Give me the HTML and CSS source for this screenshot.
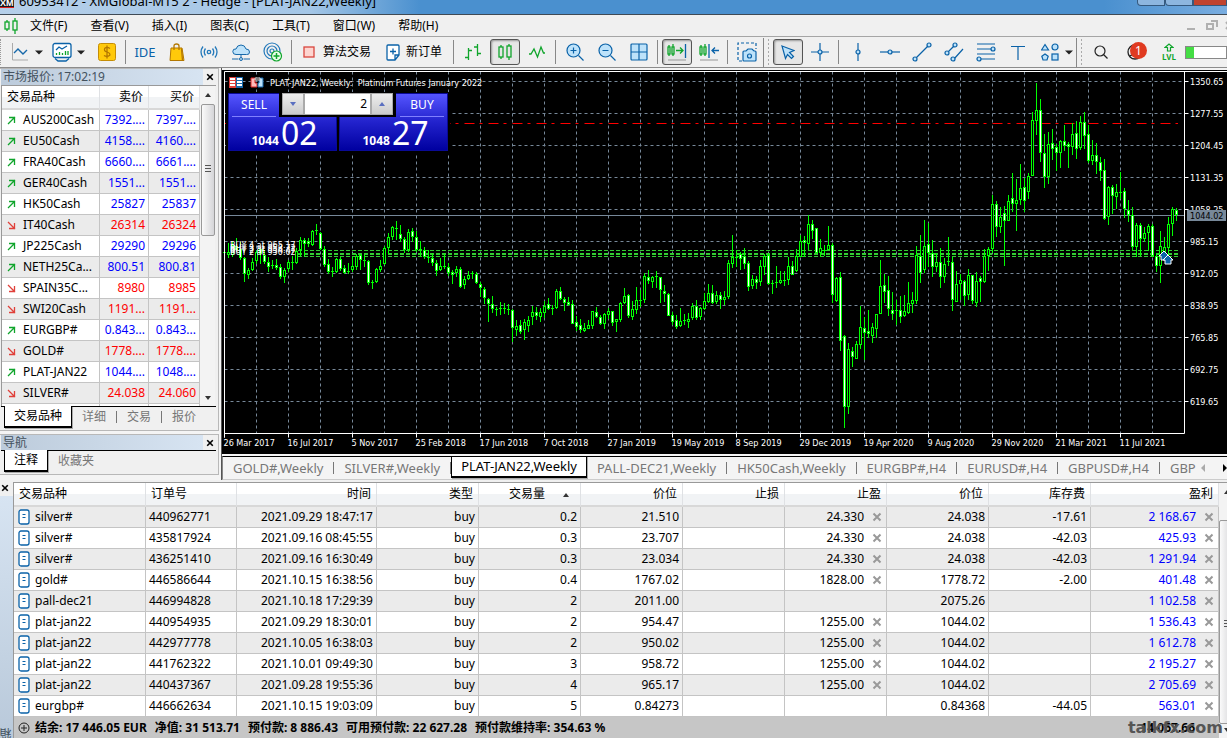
FILE: index.html
```html
<!DOCTYPE html>
<html lang="zh-CN">
<head>
<meta charset="utf-8">
<title>XMGlobal-MT5 2 - Hedge</title>
<link rel="stylesheet" href="styles.css">
</head>
<body>
<svg class="defs" aria-hidden="true">
  <symbol id="up" viewBox="0 0 9 9"><path d="M1 8 8 1M2 1.500h5.500v5.500" fill="none" stroke="#10a52c" stroke-width="1.300"/></symbol>
  <symbol id="down" viewBox="0 0 9 9"><path d="M1 1 8 8M7.500 2v5.500H2" fill="none" stroke="#e0403a" stroke-width="1.300"/></symbol>
  <symbol id="doc" viewBox="0 0 12 16"><rect x="1" y="1" width="10" height="14" rx="2" fill="#fff" stroke="#0a62a8" stroke-width="1.300"/><path d="M4.500 5.500h3M4.500 8.500h3" stroke="#0a62a8"/></symbol>
  <symbol id="cross" viewBox="0 0 10 10"><path d="M1.500 1.500l7 7M8.500 1.500l-7 7" stroke="currentColor" stroke-width="2"/></symbol>
  <symbol id="caret" viewBox="0 0 8 5"><path d="M0 .5h8l-4 4z" fill="#222"/></symbol>
</svg>

<header class="titlebar">
  <span class="applogo">XM</span>
  <span class="apptitle">60953412 - XMGlobal-MT5 2 - Hedge - [PLAT-JAN22,Weekly]</span>
  <div class="winbtns"><button aria-label="最小化"></button><button aria-label="最大化"></button><button class="close" aria-label="关闭"></button></div>
</header>

<nav class="menubar">
  <svg class="menulogo" width="14" height="16" viewBox="0 0 14 16" fill="none" stroke="#10a52c" stroke-width="1.300"><rect x="1" y="4" width="4" height="7"/><path d="M3 2v2M3 11v2M11 0v3M11 12v4"/><rect x="9" y="3" width="4" height="9"/></svg>
  <button>文件(F)</button><button>查看(V)</button><button>插入(I)</button><button>图表(C)</button><button>工具(T)</button><button>窗口(W)</button><button>帮助(H)</button>
  <svg class="mdi" width="46" height="12" viewBox="0 0 46 12" fill="none" stroke="#b0b0b0" stroke-width="2"><path d="M0 9h8M24 1h6v6"/><rect x="20" y="4" width="6" height="5"/><path d="M39 2l6 7M45 2l-6 7"/></svg>
</nav>

<div class="toolbar">
  <div class="drops">
    <button class="drop" aria-label="线图"><svg width="18" height="20" viewBox="0 0 18 20" fill="none"><path d="M1.500 1v17H17" stroke="#aaa"/><path d="M3 11l4-4 5 5 4-4" stroke="#1769aa" stroke-width="1.400"/></svg><svg width="8" height="5"><use href="#caret"/></svg></button>
    <button class="drop" aria-label="指标"><svg width="20" height="20" viewBox="0 0 20 20" fill="none" stroke="#0a62a8" stroke-width="1.300"><rect x="1" y="1.500" width="18" height="14" rx="2" fill="#fff"/><path d="M4 8l3-3 3 2 5-3M3 16.500l3 2.500h8l3-2.500"/><path d="M4.500 13v-2M7.500 13v-3M10.500 13v-2M13.500 13V9M16 13v-4" stroke="#10a52c"/></svg><svg width="8" height="5"><use href="#caret"/></svg></button>
  </div>
  <button class="tool" aria-label="报价"><svg width="18" height="18" viewBox="0 0 18 18"><rect x=".5" y=".5" width="17" height="17" rx="2" fill="#ffc90a" stroke="#c58d05"/><path d="M12 5.500Q9 3.500 6.800 5.200 5.500 8 9 9t2.800 3.300Q9 14.500 6 12.500M9 2.500v13" fill="none" stroke="#b37700" stroke-width="1.300"/></svg></button>
  <i class="sep"></i>
  <button class="tool ide">IDE</button>
  <button class="tool" aria-label="市场"><svg width="16" height="18" viewBox="0 0 16 18"><path d="M2 5h11l2 12.500H1z" fill="#ffc90a" stroke="#b37700"/><path d="M5 7V3q0-2 2.500-2T10 3v4M12.500 5.500l1 12" fill="none" stroke="#b37700" stroke-width="1.300"/></svg></button>
  <button class="tool" aria-label="信号"><svg width="18" height="14" viewBox="0 0 18 14" fill="none" stroke="#2479ba" stroke-width="1.300"><circle cx="9" cy="7" r="1.700"/><path d="M5.500 3.500q-2.500 3.500 0 7M12.500 3.500q2.500 3.500 0 7M3 1.500q-4 5.500 0 11M15 1.500q4 5.500 0 11"/></svg></button>
  <button class="tool" aria-label="云"><svg width="18" height="17" viewBox="0 0 18 17" stroke="#1769aa"><path d="M4 10.500Q.8 10.500.8 7.500T4 5q1-4 5-4t5 4q3.500 0 3.500 3T14.500 10.500z" fill="#bde2fa"/><path d="M9 10.500v3M0 15h6.500M11.500 15H18" fill="none"/><circle cx="9" cy="15" r="1.500" fill="#bde2fa"/></svg></button>
  <button class="tool" aria-label="VPS"><svg width="20" height="20" viewBox="0 0 20 20" fill="none" stroke="#2479ba" stroke-width="1.200"><circle cx="9" cy="9" r="8"/><circle cx="9" cy="9" r="5"/><circle cx="9" cy="9" r="2"/><circle cx="13.500" cy="14" r="5" fill="#eaffea" stroke="#10a52c"/><path d="M10.500 14h6M13.500 11v6" stroke="#10a52c" stroke-width="1.500"/></svg></button>
  <i class="sep"></i>
  <button class="texttool"><svg width="12" height="12" viewBox="0 0 12 12"><rect x="1" y="1" width="10" height="10" fill="#fdd5d0" stroke="#d9463d" stroke-width="1.300"/></svg>算法交易</button>
  <button class="texttool order"><svg width="14" height="17" viewBox="0 0 14 17" fill="#fff" stroke="#0a62a8" stroke-width="1.300"><path d="M1 2q0-1 1-1h10q1 0 1 1v9l-4 5H2q-1 0-1-1zM13 11H9v5M4 7.500h6M7 4.500v6"/></svg>新订单</button>
  <i class="sep"></i>
  <button class="tool" aria-label="柱状图"><svg width="18" height="18" viewBox="0 0 18 18" fill="none" stroke="#10a52c" stroke-width="1.300"><path d="M4.500 5v12M1 14.500h3.500M4.500 7.500H8M13.500 1v12M10 4h3.500M13.500 10.500H17"/></svg></button>
  <button class="tool on" aria-label="蜡烛图"><svg width="14" height="16" viewBox="0 0 14 16" fill="none" stroke="#10a52c" stroke-width="1.300"><rect x="1" y="3" width="4" height="10"/><rect x="9" y="2" width="4" height="11"/><path d="M3 1v2M3 13v2M11 0v2M11 13v3"/></svg></button>
  <button class="tool" aria-label="折线"><svg width="18" height="14" viewBox="0 0 18 14" fill="none" stroke="#10a52c" stroke-width="1.300"><path d="M1 9h2l3-5 3.500 8L13 2l2.500 6H17"/></svg></button>
  <i class="sep"></i>
  <button class="tool" aria-label="放大"><svg width="18" height="18" viewBox="0 0 18 18" fill="#bde2fa" stroke="#0a62a8" stroke-width="1.200"><circle cx="7.500" cy="7.500" r="6.500"/><path d="M4.500 7.500h6M7.500 4.500v6M12.500 12.500l5 5"/></svg></button>
  <button class="tool" aria-label="缩小"><svg width="18" height="18" viewBox="0 0 18 18" fill="#bde2fa" stroke="#0a62a8" stroke-width="1.200"><circle cx="7.500" cy="7.500" r="6.500"/><path d="M4.500 7.500h6M12.500 12.500l5 5"/></svg></button>
  <button class="tool" aria-label="平铺"><svg width="18" height="18" viewBox="0 0 18 18" fill="#bde2fa" stroke="#0a62a8" stroke-width="1.200"><rect x="1" y="1" width="16" height="16" rx="1"/><path d="M9 1v16M1 9h16"/></svg></button>
  <i class="sep"></i>
  <button class="tool on" aria-label="图表移动"><svg width="20" height="18" viewBox="0 0 20 18" fill="none" stroke="#10a52c" stroke-width="1.300"><rect x="1" y="4" width="2" height="7"/><rect x="5" y="4" width="2" height="7"/><path d="M2 2v2M2 11v2M6 1v3M6 11v2M9 7.500h7M13 4.500l3 3-3 3"/><path d="M18.500 1v14" stroke="#0a62a8"/><path d="M1 17h18" stroke="#aaa"/></svg></button>
  <button class="tool" aria-label="自动滚动"><svg width="20" height="18" viewBox="0 0 20 18" fill="none" stroke="#10a52c" stroke-width="1.300"><rect x="1" y="4" width="2" height="7"/><rect x="5" y="4" width="2" height="7"/><path d="M2 2v2M2 11v2M6 1v3M6 11v2"/><path d="M10 1v14M13 7.500h7M16 4.500l-3 3 3 3" stroke="#0a62a8"/><path d="M1 17h18" stroke="#aaa"/></svg></button>
  <i class="sep"></i>
  <button class="tool" aria-label="截图"><svg width="20" height="20" viewBox="0 0 20 20" fill="none" stroke="#0a62a8" stroke-width="1.200"><path d="M5 19H1V1h18v6" stroke-dasharray="3 2"/><path d="M6 10q0-1 1-1h2l2-2h4l2 2h1q1 0 1 1v8q0 1-1 1H7q-1 0-1-1z" fill="#bde2fa"/><circle cx="12.500" cy="14" r="2"/></svg></button>
  <i class="grip"></i>
  <button class="tool on" aria-label="光标"><svg width="14" height="15" viewBox="0 0 14 15" fill="#bde2fa" stroke="#0a62a8" stroke-width="1.200"><path d="M1 1l12 4.500-4.500 2 4 4-2 2-4-4-2 4z"/></svg></button>
  <button class="tool" aria-label="十字线"><svg width="18" height="18" viewBox="0 0 18 18" fill="#bde2fa" stroke="#0a62a8" stroke-width="1.200"><path d="M9 0v18M0 9h18"/><circle cx="9" cy="9" r="2"/></svg></button>
  <i class="sep"></i>
  <button class="tool" aria-label="垂直线"><svg width="18" height="18" viewBox="0 0 18 18" fill="#bde2fa" stroke="#0a62a8" stroke-width="1.200"><path d="M9 0v18"/><circle cx="9" cy="9" r="2"/></svg></button>
  <button class="tool" aria-label="水平线"><svg width="20" height="18" viewBox="0 0 20 18" fill="#bde2fa" stroke="#0a62a8" stroke-width="1.200"><path d="M0 9h20"/><circle cx="10" cy="9" r="2"/></svg></button>
  <button class="tool" aria-label="趋势线"><svg width="20" height="20" viewBox="0 0 20 20" fill="#bde2fa" stroke="#0a62a8" stroke-width="1.200"><path d="M3 17L17 3"/><circle cx="3" cy="17" r="2"/><circle cx="17" cy="3" r="2"/></svg></button>
  <button class="tool" aria-label="通道"><svg width="20" height="20" viewBox="0 0 20 20" fill="#bde2fa" stroke="#0a62a8" stroke-width="1.200"><path d="M3 11l8-8M10 17l9-10"/><circle cx="3" cy="11" r="2"/><circle cx="11" cy="3" r="2"/><circle cx="9" cy="17" r="2"/></svg></button>
  <button class="tool" aria-label="斐波那契"><svg width="20" height="20" viewBox="0 0 20 20" fill="#bde2fa" stroke="#0a62a8" stroke-width="1.200"><path d="M1 2h18M1 7h18M1 12h18M1 17h18"/><circle cx="17" cy="7" r="2"/><circle cx="3" cy="17" r="2"/></svg></button>
  <button class="tool" aria-label="文本"><svg width="14" height="15" viewBox="0 0 14 15"><path d="M0 1.500h14M7 1.500V15" stroke="#0a62a8" stroke-width="1.200"/></svg></button>
  <button class="drop" aria-label="对象"><svg width="18" height="18" viewBox="0 0 18 18" fill="#bde2fa" stroke="#0a62a8" stroke-width="1.200"><path d="M4 1.500L7.500 7h-7zM4 11l3.200 2.300L6 17H2L.8 13.300z"/><circle cx="14" cy="4" r="3"/><rect x="11" y="11" width="6" height="6"/></svg><svg width="8" height="5"><use href="#caret"/></svg></button>
  <i class="grip"></i>
  <button class="tool" aria-label="搜索"><svg width="14" height="14" viewBox="0 0 14 14" fill="none" stroke="#222" stroke-width="1.200"><circle cx="6" cy="6" r="5"/><path d="M9.500 9.500L13.500 13.500"/></svg></button>
  <button class="tool bell" aria-label="通知"><svg width="16" height="16" viewBox="0 0 16 16" fill="none" stroke="#222" stroke-width="1.300"><circle cx="8" cy="8" r="7"/><circle cx="8" cy="6" r="3"/><path d="M3 12q5-4 10 0"/></svg><span class="badge">1</span></button>
  <button class="tool lvl" aria-label="等级"><svg width="10" height="9" viewBox="0 0 10 9" fill="none" stroke="#10a52c" stroke-width="1.200"><path d="M1 4.500L5 1l4 3.500H6.500V8h-3V4.500z"/></svg><span>LVL</span></button>
  <div class="progress"><div></div></div>
</div>

<main class="workspace">
  <aside class="side">
    <section class="dock">
      <div class="dockhead"><span>市场报价: 17:02:19</span><button aria-label="关闭市场报价"><svg width="8" height="8" viewBox="0 0 10 10"><use href="#cross"/></svg></button></div>
      <div class="quotes">
        <table class="grid market">
          <colgroup><col><col class="w49"><col class="w51"></colgroup>
          <thead><tr><th class="l">交易品种</th><th>卖价</th><th>买价</th></tr></thead>
          <tbody id="market"></tbody>
        </table>
        <div class="scroll"><i class="tri upw"></i><i class="thumb"></i><i class="tri dnw"></i></div>
      </div>
      <div class="tabs"><button class="active">交易品种</button><button>详细</button><button>交易</button><button>报价</button></div>
    </section>
    <section class="dock nav">
      <div class="dockhead"><span>导航</span><button aria-label="关闭导航"><svg width="8" height="8" viewBox="0 0 10 10"><use href="#cross"/></svg></button></div>
      <div class="tabs"><button class="active">注释</button><button>收藏夹</button></div>
    </section>
  </aside>

  <section class="chartarea">
    <div class="chart">
      <svg id="chart" class="plot" role="img" aria-label="PLAT-JAN22 Weekly"></svg>
      <div class="oneclick">
        <button class="deal"><span class="side-name">SELL</span><span class="price"><b>1044</b><em>02</em></span></button>
        <button class="deal buy"><span class="side-name">BUY</span><span class="price"><b>1048</b><em>27</em></span></button>
        <div class="lots"><button aria-label="减少"><i class="tri dnw"></i></button><input value="2" aria-label="交易量"><button aria-label="增加"><i class="tri upw"></i></button></div>
      </div>
    </div>
    <div class="charttabs tabs">
      <button>GOLD#,Weekly</button><button>SILVER#,Weekly</button><button class="active">PLAT-JAN22,Weekly</button><button>PALL-DEC21,Weekly</button><button>HK50Cash,Weekly</button><button>EURGBP#,H4</button><button>EURUSD#,H4</button><button>GBPUSD#,H4</button><button class="cut">GBP</button>
      <span class="arrows"><i class="left"></i><i class="right"></i></span>
    </div>
  </section>
</main>

<section class="terminal">
  <div class="strip"><button aria-label="关闭工具箱"><svg width="8" height="8" viewBox="0 0 10 10"><use href="#cross"/></svg></button><div class="striptitle"><span>工具箱</span></div></div>
  <div class="trades">
    <table class="grid">
      <colgroup><col><col class="w91"><col class="w140"><col class="w102"><col class="w102"><col class="w102"><col class="w102"><col class="w102"><col class="w102"><col class="w102"><col class="w128"></colgroup>
      <thead><tr><th class="l">交易品种</th><th class="l">订单号</th><th>时间</th><th>类型</th><th class="sorted">交易量<i class="tri upw"></i></th><th>价位</th><th>止损</th><th>止盈</th><th>价位</th><th>库存费</th><th>盈利</th></tr></thead>
      <tbody id="trades"></tbody>
    </table>
    <div class="status">
      <svg width="12" height="12" viewBox="0 0 12 12" fill="none" stroke="#222"><circle cx="6" cy="6" r="5"/><path d="M3 6h6M6 3v6"/></svg>
      <span>结余: 17 446.05 EUR</span><span>净值: 31 513.71</span><span>预付款: 8 886.43</span><span>可用预付款: 22 627.28</span><span>预付款维持率: 354.63 %</span>
      <span class="total">14 067.66</span>
      <span class="mark">talkfx.com</span>
    </div>
  </div>
  <div class="scroll edge"><i class="tri upw"></i><i class="thumb"></i><i class="tri dnw"></i></div>
</section>
<script src="app.js"></script>
</body>
</html>
```

FILE: styles.css
```css
* { box-sizing: border-box; }
body { margin: 0; min-height: 100vh; display: flex; flex-direction: column; background: #f0f0f0; color: #000; font: 12px/16px "Noto Sans", "Noto Sans CJK SC", sans-serif; overflow: hidden; }
button { font: inherit; color: inherit; background: none; border: 0; padding: 0; margin: 0; white-space: nowrap; }
svg { display: block; flex: none; }
.defs { width: 0; height: 0; position: absolute; }

.titlebar { height: 15px; display: flex; align-items: flex-end; gap: 5px; overflow: hidden; border-bottom: 1px solid #3f4a55; background: linear-gradient(90deg, #b5cfe9 0, #a4c6e6 310px, #4a90cf 420px, #4a90cf 90%, #79ade0 100%); }
.applogo { width: 14px; height: 9px; margin-bottom: 6px; overflow: hidden; background: #161616; color: #fff; font: bold 9px/8px "Liberation Sans", sans-serif; border-bottom: 1px solid #d22; }
.apptitle { flex: 1; font-size: 13px; line-height: 18px; margin-bottom: 4px; white-space: nowrap; }
.winbtns { display: flex; align-self: flex-start; }
.winbtns button { width: 28px; height: 6px; border: 1px solid #35597e; border-top: 0; border-radius: 0 0 0 4px; background: #8db6df; }
.winbtns .close { width: 34px; background: #c0432f; border-radius: 0; }

.menubar { height: 22px; display: flex; align-items: center; border-bottom: 1px solid #a5a5a5; padding-left: 4px; }
.menulogo { margin-right: 12px; }
.menubar button { margin-right: 23px; }
.mdi { margin-left: auto; margin-right: -6px; }

.toolbar { height: 31px; display: flex; align-items: center; border-bottom: 1px solid #8c8c8c; background: #f0f0f0; overflow: hidden; flex: none; }
.drops { display: flex; padding: 0 3px 0 3px; border-left: 1px dotted #999; }
.tool { width: 32px; height: 26px; display: flex; align-items: center; justify-content: center; flex: none; }
.tool.on { border: 1px solid #555; border-radius: 3px; background: #e6e6e6; box-shadow: inset 1px 1px 2px #999; width: 30px; margin: 0 1px; }
.drop { width: 42px; height: 26px; display: flex; align-items: center; flex: none; }
.drop svg:first-child { margin: 0 auto; }
.drop svg:last-child { margin-right: 3px; }
.sep { width: 6px; height: 24px; flex: none; border-left: 2px solid transparent; background: linear-gradient(90deg, #888 1px, transparent 1px); background-clip: padding-box; }
.grip { width: 9px; height: 29px; flex: none; border-left: 1px solid #888; padding-left: 3px; background: radial-gradient(circle, #aaa 1px, transparent 1px) 3px 0 / 3px 4px repeat-y; }
.ide { color: #0a62a8; font-size: 13px; }
.texttool { display: flex; align-items: center; gap: 8px; width: 85px; padding-left: 8px; flex: none; }
.order { width: 71px; padding-left: 6px; gap: 6px; }
.bell { position: relative; margin: 0 2px; }
.badge { position: absolute; left: 11px; top: 3px; width: 17px; height: 17px; border-radius: 9px; background: #e03a20; color: #fff; font-size: 12px; line-height: 17px; }
.lvl { flex-direction: column; gap: 1px; color: #10a52c; font-size: 8px; line-height: 8px; font-weight: bold; }
.progress { flex: 1; height: 13px; border: 1px solid #888; background: #fff; }
.progress div { width: 8px; height: 11px; background: #44dd44; }

.workspace { display: flex; background: #f4f4f4; }
.side { width: 222px; flex: none; padding-right: 2px; border-right: 1px solid #555; }
.dock { padding: 0 2px 0 1px; border: 1px solid #b8b8b8; border-left: 0; background: #f0f0f0; }
.nav { margin-top: 3px; }
.dockhead { height: 16px; display: flex; align-items: center; justify-content: space-between; color: #44525e; background: linear-gradient(90deg, #bccbdb, #d7e4f2 202px, #f0f0f0 202px); padding-left: 2px; line-height: 14px; }
.nav .dockhead { height: 15px; }
.dockhead button { width: 12px; height: 12px; display: flex; align-items: center; justify-content: center; color: #000; }
.quotes { display: flex; height: 321px; overflow: hidden; border-left: 1px solid #999; border-top: 1px solid #999; align-items: stretch; }
.grid { border-collapse: separate; border-spacing: 0; table-layout: fixed; background: #fff; }
.grid th { height: 24px; padding: 0 5px; font-weight: normal; text-align: right; background: linear-gradient(#fff 50%, #f1f3f5 50%); border-right: 1px solid #dfe1e4; border-bottom: 2px solid #d8d8d8; white-space: nowrap; }
.grid td { height: 21px; padding: 0 3px; line-height: 20px; text-align: right; border-right: 1px solid #c4c4c4; border-bottom: 1px solid #c4c4c4; white-space: nowrap; overflow: hidden; }
.grid .l { text-align: left; }
.market { width: 198px; flex: none; align-self: flex-start; }
.market tr:nth-child(even) td { background: #ebebeb; }
.w49 { width: 49px; } .w51 { width: 51px; } .w91 { width: 91px; } .w102 { width: 102px; } .w128 { width: 128px; } .w140 { width: 140px; }
.sym { display: flex; align-items: center; gap: 7px; padding-left: 2px; }
.blue { color: #00f; } .red { color: #f00; }
.scroll { width: 15px; flex: none; display: flex; flex-direction: column; align-items: center; padding: 7px 0 6px; background: #f3f3f3; }
.thumb { width: 14px; height: 132px; margin-top: 7px; border: 1px solid #999; border-radius: 2px; background: linear-gradient(#555, #555) center 60px / 6px 1px no-repeat, linear-gradient(#555, #555) center 63px / 6px 1px no-repeat, linear-gradient(#555, #555) center 66px / 6px 1px no-repeat, linear-gradient(90deg, #fafafa, #d5d5d8); }
.tri { width: 0; height: 0; border: 3px solid transparent; flex: none; }
.upw { border-top: 0; border-bottom: 4px solid #333; }
.dnw { border-bottom: 0; border-top: 4px solid #333; }
.scroll .dnw { margin-top: auto; }
.tabs { display: flex; align-items: flex-start; color: #777; border-top: 1px solid #000; height: 24px; padding-left: 3px; }
.tabs button { height: 12px; line-height: 12px; margin-top: 4px; padding: 0 10px; border-right: 1px solid #777; }
.tabs button:last-of-type { border-right: 0; }
.tabs .active { height: 22px; line-height: 20px; margin-top: -1px; padding: 0 9px; color: #000; background: #fff; border: solid #000; border-width: 0 1px 2px 1px; box-shadow: 1px 1px #aaa; }

.chartarea { flex: 1; min-width: 0; display: flex; flex-direction: column; }
.chart { position: relative; background: #000; margin-top: 2px; height: 384px; }
.plot { width: 100%; height: 384px; font: 9px "DejaVu Sans Condensed", "DejaVu Sans", sans-serif; }
.oneclick { position: absolute; left: 4px; top: 22px; padding: 1px 2px 3px; display: flex; gap: 2px; background: #000; }
.deal { width: 109px; height: 58px; display: flex; flex-direction: column; align-items: stretch; color: #fff; background: linear-gradient(#5555ff, #2222cc 50%, #0000a0); border: 1px solid #0a0a96; }
.side-name { width: 44px; margin-left: 3px; height: 23px; line-height: 22px; border-bottom: 1px solid #8080ff; }
.buy .side-name { align-self: flex-end; margin-right: 3px; }
.price { display: flex; align-items: baseline; justify-content: center; gap: 2px; line-height: 31px; padding-left: 4px; }
.price em { font-style: normal; font-size: 32px; }
.lots { position: absolute; left: 53px; top: 0; width: 117px; height: 25px; padding: 1px 3px 2px; background: #000; display: flex; }
.lots button { width: 22px; display: flex; align-items: center; justify-content: center; background: linear-gradient(#eee, #ccc); border: 1px solid #aaa; }
.lots .upw { border-bottom-color: #5a6fc0; } .lots .dnw { border-top-color: #5a6fc0; }
.lots input { flex: 1; min-width: 0; border: 1px solid #aaa; padding: 0 3px; text-align: right; font: inherit; background: #fff; }
.charttabs { margin-top: 2px; padding-left: 0; overflow: hidden; border-left: 1px solid #888; border-bottom: 1px solid #ccc; font-size: 13px; }
.charttabs button { padding: 0 10px; margin-top: 5px; flex: none; }
.charttabs .active { margin-top: -1px; padding: 0 9px; }
.charttabs .cut { flex: 0 1 auto; padding-right: 0; }
.arrows { margin-left: auto; display: flex; gap: 18px; padding-top: 7px; }
.arrows i { border: 4px solid transparent; border-width: 4px 0 4px 4px; border-left-color: #000; }
.arrows .left { border-width: 4px 4px 4px 0; border-right-color: #aaa; }

.terminal { flex: 1; display: flex; margin-top: 2px; min-height: 0; }
.strip { width: 14px; flex: none; display: flex; flex-direction: column; border-right: 1px solid #999; }
.strip button { padding: 2px 1px 4px; }
.striptitle { flex: 1; overflow: hidden; background: linear-gradient(#d7e4f2, #b9c9da); display: flex; align-items: flex-end; height: 0; }
.striptitle span { writing-mode: vertical-rl; transform: rotate(180deg); color: #44525e; margin-bottom: -26px; line-height: 13px; }
.trades { flex: 1; min-width: 0; display: flex; flex-direction: column; border-top: 1px solid #999; }
.trades .grid { width: 100%; }
.trades tr:nth-child(odd) td { background: #ebebeb; }
.trades .sym { gap: 5px; padding-left: 1px; }
.withx { display: flex; justify-content: flex-end; align-items: center; gap: 8px; padding-right: 1px; }
.withx svg { color: #999; }
.sorted .tri { display: inline-block; vertical-align: middle; margin: 0 6px 0 18px; }
.status { flex: 1; min-height: 21px; display: flex; align-items: center; gap: 8px; padding: 0 4px; background: #c6c6c6; font-weight: bold; position: relative; white-space: nowrap; }
.status svg { margin-right: -3px; }
.total { margin-left: auto; padding-right: 20px; }
.mark { position: absolute; right: -4px; bottom: 0; font: 900 16px/20px "DejaVu Sans", sans-serif; color: #555; }
.edge { width: 8px; border-top: 1px solid #999; overflow: hidden; align-items: flex-start; }
.edge .thumb { height: 204px; background-position: 4px 99px, 4px 102px, 4px 105px, 0 0; margin-top: 26px; flex: none; }
.edge .tri { margin-left: 5px; }
```

FILE: app.js
```js
const quotes = [
  ['AUS200Cash', '7392....', '7397....', 1], ['EU50Cash', '4158....', '4160....', 1], ['FRA40Cash', '6660....', '6661....', 1],
  ['GER40Cash', '1551...', '1551...', 1], ['HK50Cash', '25827', '25837', 1], ['IT40Cash', '26314', '26324', 0],
  ['JP225Cash', '29290', '29296', 1], ['NETH25Ca...', '800.51', '800.81', 1], ['SPAIN35C...', '8980', '8985', 0],
  ['SWI20Cash', '1191...', '1191...', 0], ['EURGBP#', '0.843...', '0.843...', 1], ['GOLD#', '1778....', '1778....', 0],
  ['PLAT-JAN22', '1044....', '1048....', 1], ['SILVER#', '24.038', '24.060', 0], ['', '', '', 2]
];
document.getElementById('market').innerHTML = quotes.map(([name, bid, ask, up]) => {
  const tone = up ? 'blue' : 'red';
  const icon = up === 2 ? '' : `<svg width="9" height="9"><use href="#${up ? 'up' : 'down'}"/></svg>`;
  return `<tr><td><div class="sym">${icon}<span>${name}</span></div></td><td class="${tone}">${bid}</td><td class="${tone}">${ask}</td></tr>`;
}).join('');

const trades = `silver#|440962771|2021.09.29 18:47:17|0.2|21.510|24.330|24.038|-17.61|2 168.67
silver#|435817924|2021.09.16 08:45:55|0.3|23.707|24.330|24.038|-42.03|425.93
silver#|436251410|2021.09.16 16:30:49|0.3|23.034|24.330|24.038|-42.03|1 291.94
gold#|446586644|2021.10.15 16:38:56|0.4|1767.02|1828.00|1778.72|-2.00|401.48
pall-dec21|446994828|2021.10.18 17:29:39|2|2011.00||2075.26||1 102.58
plat-jan22|440954935|2021.09.29 18:30:01|2|954.47|1255.00|1044.02||1 536.43
plat-jan22|442977778|2021.10.05 16:38:03|2|950.02|1255.00|1044.02||1 612.78
plat-jan22|441762322|2021.10.01 09:49:30|3|958.72|1255.00|1044.02||2 195.27
plat-jan22|440437367|2021.09.28 19:55:36|4|965.17|1255.00|1044.02||2 705.69
eurgbp#|446662634|2021.10.15 19:03:09|5|0.84273||0.84368|-44.05|563.01`.split('\n').map(r => r.split('|'));
const withX = v => v ? `<div class="withx">${v}<svg width="10" height="10"><use href="#cross"/></svg></div>` : '';
document.getElementById('trades').innerHTML = trades.map(([sym, id, time, vol, open, tp, now, swap, profit]) =>
  `<tr><td><div class="sym"><svg width="12" height="16"><use href="#doc"/></svg><span>${sym}</span></div></td><td class="l">${id}</td><td>${time}</td><td>buy</td><td>${vol}</td><td>${open}</td><td></td><td>${withX(tp)}</td><td>${now}</td><td>${swap}</td><td class="blue">${withX(profit)}</td></tr>`
).join('');

// Candles: high, body top, body bottom, low; "d" marks a falling week.
const candles = `178,182,184,187 173,182,185,188 171,175,185,187 168,176,180,182 172,179,188,190d 187,188,204,212d 198,200,205,209 188,192,200,201 180,182,191,194 177,179,184,194d
180,185,192,194d 187,192,197,202d 190,195,197,199 189,195,198,200d 194,197,207,209d 198,200,207,213 190,192,199,202 186,192,194,200 178,181,193,194 167,170,180,186
168,170,174,186d 168,171,174,177d 160,161,175,176 154,160,162,165 162,163,179,180d 176,179,195,197d 189,194,202,204d 197,201,203,207 188,189,202,203 187,189,199,201d
195,198,203,204d 193,201,203,204 187,196,200,202 184,186,197,200 184,185,190,200d 185,190,191,197 190,191,213,215d 210,212,213,219 198,199,212,213 190,196,200,202
176,178,194,195 163,167,178,184 156,157,167,170 151,158,160,170 155,164,169,172d 167,169,180,183d 159,162,180,182 158,161,167,172d 161,167,180,182d 171,179,181,187
177,180,187,189d 180,187,188,193 184,188,193,196d 190,193,201,206d 188,196,200,201 184,196,197,199 193,197,203,206d 200,202,205,214d 196,199,203,207 197,199,217,218d
206,209,215,219 201,205,209,210 201,203,205,209 202,204,213,214d 212,214,218,227d 217,219,228,234d 228,229,234,252d 226,234,239,243d 237,239,241,246 232,238,240,245
233,238,240,244 234,239,240,245 239,240,258,272d 250,256,260,266 250,255,262,264d 249,252,260,270 246,250,256,262 236,242,247,255 237,242,246,250d 238,242,247,252
231,236,243,248 228,234,239,240d 235,238,239,245 219,221,238,239 217,221,229,230d 227,229,233,241d 227,232,235,236d 230,234,254,254d 246,252,257,261d 249,255,260,263d
253,258,261,262 250,255,259,259 241,241,256,259 237,242,247,248d 245,247,254,255d 243,244,254,259 238,241,245,249 241,241,253,256d 249,249,252,262 232,233,250,252
218,226,233,234 224,225,246,248d 231,239,247,250 217,230,240,244 220,230,231,237 203,206,230,233 200,207,211,214d 206,207,212,218 201,206,207,218 207,207,220,233d
215,221,224,232d 223,224,246,246d 242,245,252,255d 245,250,257,259d 238,251,256,257 244,250,252,255 243,249,252,258 233,236,248,250 230,236,248,250d 237,238,247,250
223,231,239,240 214,223,232,233 215,223,233,234d 221,225,232,234 222,225,230,239d 221,227,230,235 190,193,227,229 165,187,194,198 180,187,188,197 182,184,189,200d
178,186,194,199d 191,193,217,221d 205,209,216,219 206,209,213,219d 190,196,212,216 184,186,197,205 183,185,214,215d 210,213,215,224 196,212,213,218 201,210,213,214
201,210,211,216 187,196,210,215 191,196,205,205d 179,186,201,202 165,171,187,187 166,170,173,187d 145,154,174,180 150,154,161,169d 158,158,183,183d 169,178,183,187
175,180,181,186 156,175,180,180 173,175,225,233d 207,208,231,232 202,207,271,281d 265,266,337,358d 273,279,337,344 277,281,287,297d 271,274,289,289 236,257,275,279
247,258,263,290d 240,261,264,268d 253,257,266,273 244,244,259,268 190,216,244,244 204,215,222,233d 206,220,239,246d 222,240,244,250d 230,240,242,255 226,240,247,253d
225,241,246,247 212,233,243,244 222,230,234,243 176,185,231,234 165,186,203,213d 150,176,200,203 153,174,183,197d 170,183,197,207d 183,192,197,202 178,192,207,218d
188,194,207,213 167,191,193,196 187,192,230,241d 201,214,232,232 204,210,214,230 210,211,226,236d 199,205,225,230 205,205,231,234d 202,211,233,237 206,208,212,232d
179,186,212,213 177,179,186,201 125,134,179,183 131,134,157,167d 137,147,157,163 136,143,151,196d 125,131,151,151 103,128,134,142d 109,130,134,161 94,118,130,135
108,117,131,142d 103,106,122,129 42,50,106,106 13,40,51,65 29,40,83,92d 64,83,107,118d 62,74,107,114 59,73,79,90d 74,77,83,101d 70,71,83,98
55,71,76,81d 72,74,77,98d 53,64,77,85 51,63,79,89d 46,52,78,80 42,52,66,79d 55,64,91,93d 70,85,91,95 73,85,92,104d 87,92,101,111d
89,100,149,150d 116,117,147,155 115,117,126,144d 114,122,127,139 102,122,124,129 118,121,139,148d 130,140,145,152d 137,145,177,181d 153,155,177,187 153,155,169,186d
157,163,169,172 154,156,163,181 154,156,186,187d 183,186,196,202d 161,176,196,213 167,177,183,190 147,154,178,187 137,139,154,166 138,140,145,151d`.split(/\s+/);

const line = (x1, y1, x2, y2, stroke, dash = '') => `<line x1="${x1}" y1="${y1}" x2="${x2}" y2="${y2}" stroke="${stroke}" stroke-dasharray="${dash}"/>`;
const text = (x, y, s, fill = '#fff') => `<text x="${x}" y="${y}" fill="${fill}">${s}</text>`;
const left = 2.5, right = 962.5, top0 = 1.5, bottom = 363.5, slate = '#778899';
let out = '';
for (let x = 34.5; x < right; x += 32) out += line(x, top0, x, bottom, slate, '3 3');
for (let k = 0; k < 11; k++) {
  const y = 11.5 + 32 * k;
  out += line(left, y, right - 3, y, slate, '3 3') + line(right, y, right + 4, y, '#fff') + text(968, y + 3.5, (1350.65 - 73.1 * k).toFixed(2));
}
out += line(left, 53.5, 956, 53.5, '#f00', '10 5 3 6');
out += line(left, 145.5, right, 145.5, slate);
for (const y of [180.5, 183.5, 184.5, 186.5]) out += line(76, y, 958, y, '#32cd32', '4 2');
candles.forEach((c, i) => {
  const [h, t, b, l] = c.replace('d', '').split(',').map(Number);
  const x = 2.5 + 4 * i;
  out += line(x, h, x, l, '#0f0');
  out += b - t < 3 ? line(x - 1.5, t + .5, x + 1.5, t + .5, '#0f0') : `<rect x="${x - 1}" y="${t + .5}" width="2" height="${b - t - 1}" fill="${c.endsWith('d') ? '#fff' : '#000'}" stroke="#0f0"/>`;
});
[['4', '965.17', 178], ['3', '958.72', 181], ['2', '954.47', 183], ['2', '950.02', 185]].forEach(([n, p, y]) => { out += text(8, y, `BUY ${n} at ${p}`); });
out += `<path d="M${left} ${bottom + 4}V${top0}H1005M${right} ${top0}V${bottom}H${left}" fill="none" stroke="#fff"/>`;
['26 Mar 2017', '16 Jul 2017', '5 Nov 2017', '25 Feb 2018', '17 Jun 2018', '7 Oct 2018', '27 Jan 2019', '19 May 2019', '8 Sep 2019', '29 Dec 2019', '19 Apr 2020', '9 Aug 2020', '29 Nov 2020', '21 Mar 2021', '11 Jul 2021'].forEach((d, i) => {
  const x = left + 64 * i;
  out += line(x, bottom, x, bottom + 4, '#fff') + text(x - 1, 376, d);
});
out += `<rect x="965" y="140" width="39" height="11" fill="${slate}"/>` + text(968, 149, '1044.02', '#000');
for (const [x, y] of [[942, 186], [946, 190]]) out += `<path d="M${x} ${y - 5}l5 5h-2v4h-6v-4h-2z" fill="#0a62a8" stroke="#fff"/>`;
out += text(48, 16, 'PLAT-JAN22, Weekly:\u00a0 Platinum Futures January 2022');
out += `<g transform="translate(7 7)"><path d="M0 0h7v11H0z" fill="#e0403a"/><path d="M7 0h7v11H7z" fill="#1769aa"/><path d="M1 2h5M8 2h5M1 5h5M8 5h5M1 8h5M8 8h5" stroke="#fff" stroke-width="2"/></g>`;
out += `<g transform="translate(28 7)"><path d="M1 1h4v5h2v4H1z" fill="#fbb" stroke="#d22"/><path d="M9 1h4v9H8V6h1z" fill="#bde2fa" stroke="#1769aa"/><path d="M5 1h5v2H5z" fill="#222" stroke="#ddd"/></g>`;
document.getElementById('chart').innerHTML = out;
```
